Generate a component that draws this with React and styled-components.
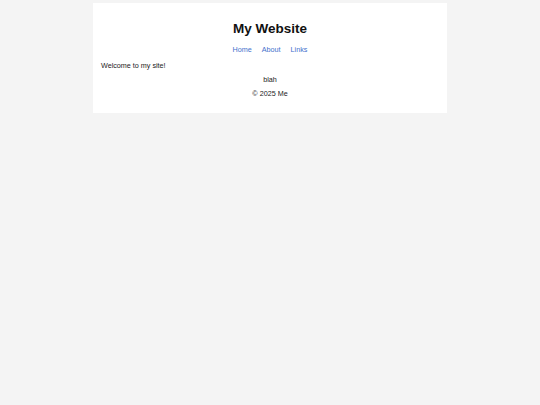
import React from 'react';
import styled, { createGlobalStyle } from 'styled-components';

const GlobalStyle = createGlobalStyle`
  html, body {
    margin: 0;
    padding: 0;
    background-color: #f4f4f4;
    font-family: 'Liberation Sans', Arial, sans-serif;
  }
`;

const Page = styled.div`
  width: 354px;
  margin: 3px auto 0;
  padding: 8px 8px 15px;
  box-sizing: border-box;
  background-color: #ffffff;
  color: #1a1a1a;
  font-size: 7.2px;
  line-height: 9px;
`;

const Header = styled.header`
  text-align: center;
`;

const Title = styled.h1`
  margin: 10px 0 7.5px;
  font-size: 13.5px;
  font-weight: bold;
  line-height: 16px;
  color: #111;
`;

const Nav = styled.nav`
  display: flex;
  justify-content: center;
  gap: 10px;
`;

const NavLink = styled.a`
  color: #4470cc;
  text-decoration: none;
`;

const Main = styled.main`
  padding-top: 7px;
`;

const Text = styled.p`
  margin: 0;
  text-align: ${(p) => (p.$center ? 'center' : 'left')};
`;

const Footer = styled.footer`
  display: flex;
  flex-direction: column;
  align-items: center;
  gap: 5px;
  padding-top: 5px;
`;

const App = () => {
  return (
    <>
      <GlobalStyle />
      <Page>
        <Header>
          <Title>My Website</Title>
          <Nav>
            <NavLink href="#">Home</NavLink>
            <NavLink href="#">About</NavLink>
            <NavLink href="#">Links</NavLink>
          </Nav>
        </Header>
        <Main>
          <Text>Welcome to my site!</Text>
        </Main>
        <Footer>
          <Text $center>blah</Text>
          <Text $center>© 2025 Me</Text>
        </Footer>
      </Page>
    </>
  );
};

export default App;
